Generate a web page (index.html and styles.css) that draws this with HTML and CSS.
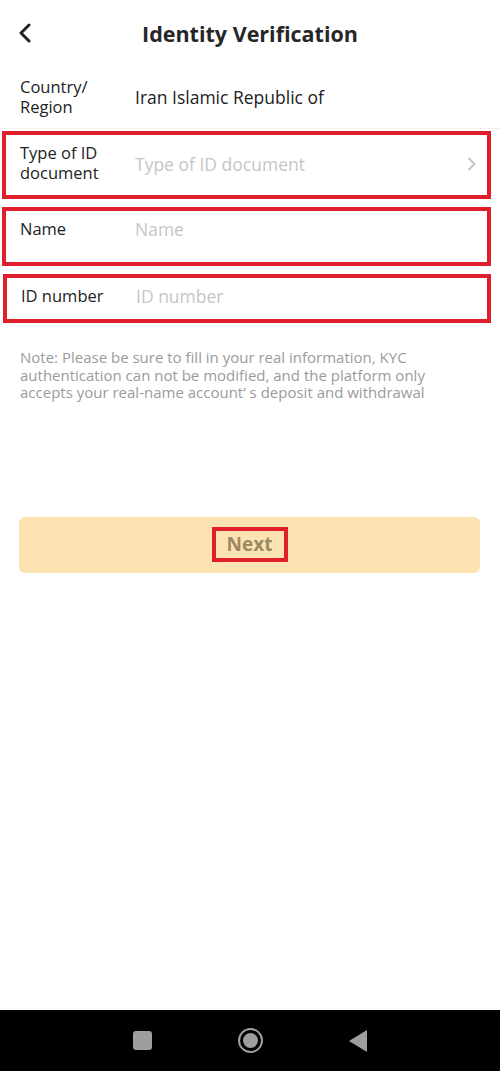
FILE: index.html
```html
<!DOCTYPE html>
<html lang="en">
<head>
    <meta charset="UTF-8">
    <meta name="viewport" content="width=device-width, initial-scale=1.0">
    <title>Identity Verification</title>
    <link rel="stylesheet" href="styles.css">
</head>
<body>
    <div class="screen">
        <header class="top-bar">
            <span class="back">
                <svg width="16" height="20" viewBox="0 0 16 20"><path d="M12 2 L4 10 L12 18" fill="none" stroke="#222" stroke-width="3" stroke-linecap="round" stroke-linejoin="round"/></svg>
            </span>
            <h1>Identity Verification</h1>
        </header>

        <!-- Country row -->
        <div class="row country">
            <div class="label">Country/<br>Region</div>
            <div class="value">Iran Islamic Republic of</div>
        </div>

        <!-- Fields -->
        <div class="field field-type">
            <div class="label">Type of ID<br>document</div>
            <div class="value placeholder">Type of ID document</div>
            <svg class="arrow" width="10" height="14" viewBox="0 0 10 14"><path d="M2 1.5 L7.5 7 L2 12.5" fill="none" stroke="#c4c4c4" stroke-width="2" stroke-linecap="round" stroke-linejoin="round"/></svg>
        </div>
        <div class="field field-name">
            <div class="label">Name</div>
            <div class="value placeholder">Name</div>
        </div>
        <div class="field field-number">
            <div class="label">ID number</div>
            <div class="value placeholder">ID number</div>
        </div>

        <p class="note">Note: Please be sure to fill in your real information, KYC authentication can not be modified, and the platform only accepts your real-name account’ s deposit and withdrawal</p>

        <button class="next-btn"><span>Next</span></button>

        <nav class="nav-bar">
            <span class="nav-square"></span>
            <span class="nav-home"><span></span></span>
            <svg class="nav-back" width="18" height="24" viewBox="0 0 18 24"><path d="M18 1 L18 23 L0 12 Z" fill="#9e9e9e"/></svg>
        </nav>
    </div>
</body>
</html>
```

FILE: styles.css
```css
* {
    box-sizing: border-box;
}
body {
    margin: 0;
    font-family: "Open Sans", "Noto Sans", sans-serif;
    color: #222;
    background: #fff;
}
.screen {
    display: flex;
    flex-direction: column;
    min-height: 1071px;
}
.top-bar {
    height: 66px;
    display: flex;
    align-items: center;
    justify-content: center;
    position: relative;
}
.top-bar h1 {
    margin: 0;
    font-size: 21.5px;
    font-weight: 700;
    color: #262626;
}
.back {
    position: absolute;
    left: 17px;
    top: 23px;
    display: flex;
}
.row, .field {
    display: flex;
    align-items: center;
    font-size: 16.5px;
    line-height: 20px;
}
.label {
    width: 115px;
    flex-shrink: 0;
}
.value {
    flex: 1;
    font-size: 17.5px;
}
.placeholder {
    color: #c6c6c6;
}
.country {
    height: 63px;
    padding: 0 20px;
    border-bottom: 1px solid #f3eded;
}
.field {
    margin: 0 9px 0 2px;
    border: 4px solid #df1f2b;
    padding: 8px 10px 0 14px;
}
.field-type {
    margin-top: 2px;
    height: 68px;
    align-items: flex-start;
}
.field-type .value,
.field-type .arrow {
    align-self: center;
    margin-top: -10px;
}
.field-name {
    margin-top: 8px;
    height: 59px;
    align-items: flex-start;
}
.field-number {
    margin-top: 8px;
    height: 49px;
    align-items: flex-start;
    margin-left: 3px;
}
.note {
    margin: 26px 50px 0 20px;
    font-size: 15px;
    line-height: 17.5px;
    color: #9b9b9b;
}
.next-btn {
    margin: 115px 20px 0 19px;
    height: 56px;
    border: none;
    border-radius: 6px;
    background: #fde3b2;
    display: flex;
    align-items: center;
    justify-content: center;
    font-family: inherit;
    padding: 0;
}
.next-btn span {
    border: 4px solid #df1f2b;
    width: 76px;
    height: 35px;
    line-height: 27px;
    font-size: 19px;
    font-weight: 700;
    color: #9a8a62;
}
.nav-bar {
    margin-top: auto;
    height: 61px;
    background: #000;
    display: flex;
    align-items: center;
    justify-content: center;
    gap: 86px;
}
.nav-square {
    width: 19px;
    height: 19px;
    border-radius: 3px;
    background: #9e9e9e;
}
.nav-home {
    width: 25px;
    height: 25px;
    border: 2px solid #9e9e9e;
    border-radius: 50%;
    display: flex;
    align-items: center;
    justify-content: center;
}
.nav-home span {
    width: 15px;
    height: 15px;
    border-radius: 50%;
    background: #9e9e9e;
}
```
